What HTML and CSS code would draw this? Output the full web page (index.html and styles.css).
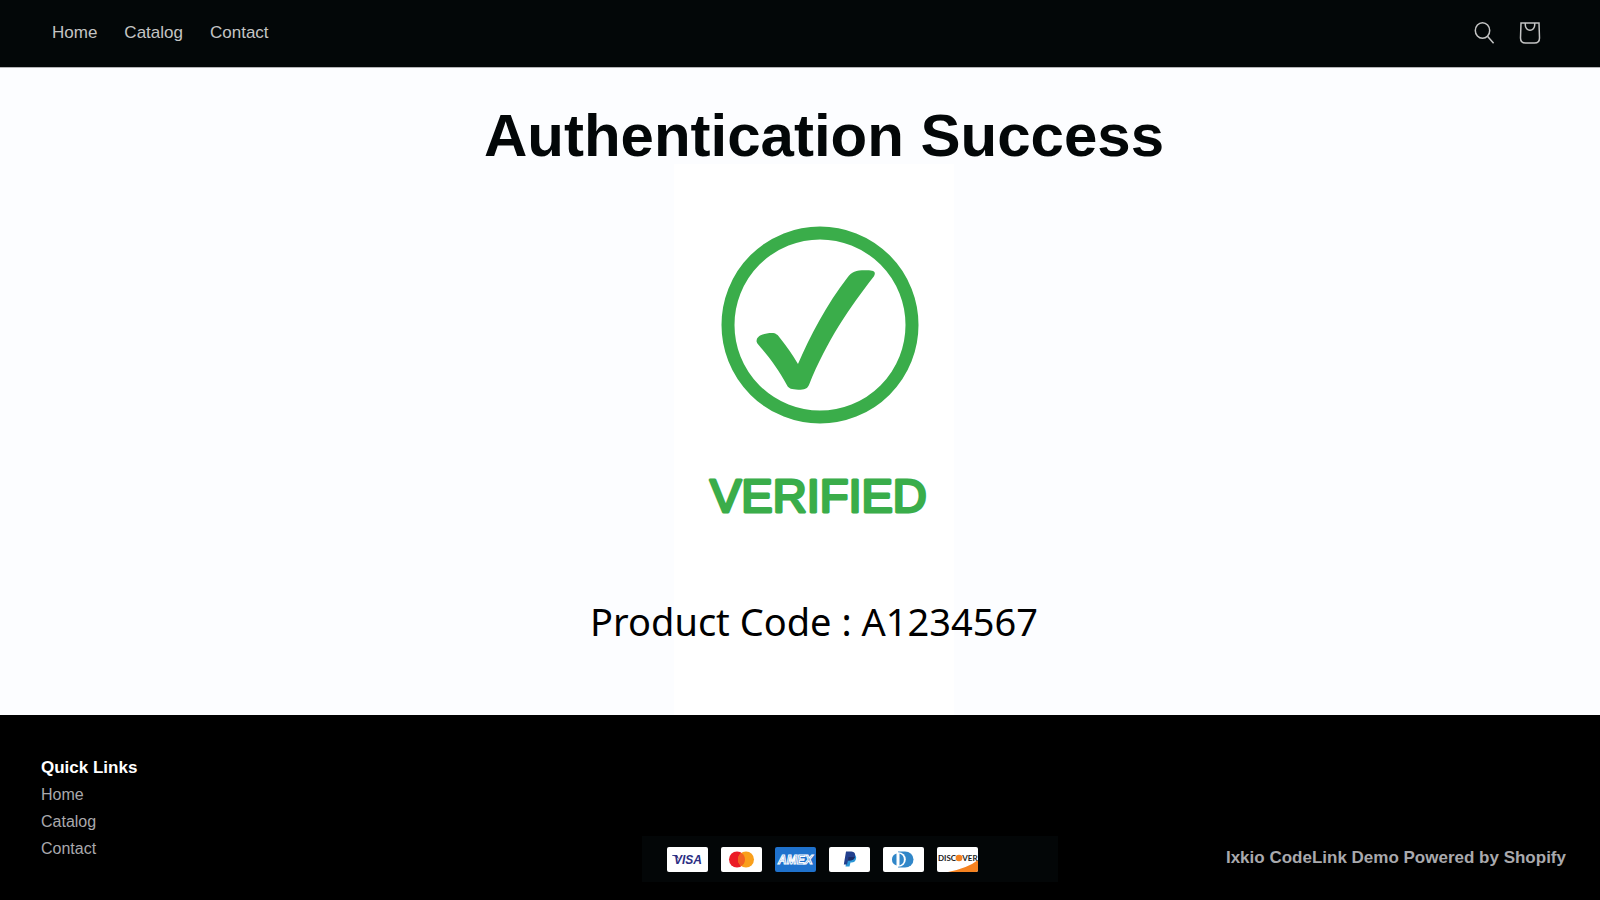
FILE: index.html
```
<!DOCTYPE html>
<html lang="en">
<head>
  <meta charset="UTF-8" />
  <meta name="viewport" content="width=device-width, initial-scale=1" />
  <title>Authentication Success</title>
  <link rel="stylesheet" href="styles.css">
</head>
<body>
  <header class="site-header">
    <nav aria-label="Main">
      <ul class="nav-list">
        <li><a href="#">Home</a></li>
        <li><a href="#">Catalog</a></li>
        <li><a href="#">Contact</a></li>
      </ul>
    </nav>
    <div class="header-icons">
      <button type="button" aria-label="Search">
        <svg viewBox="0 0 24 24" class="icon">
          <ellipse cx="10.5" cy="9.5" rx="7.2" ry="7.8" />
          <path d="M15.500 15.200 L21.600 22.200" />
        </svg>
      </button>
      <a href="#" aria-label="Cart">
        <svg viewBox="0 0 24 24" class="icon">
          <path d="M3 2 H21 L21.5 17 Q21.5 22 16.5 22 H7.5 Q2.5 22 2.5 17 Z" />
          <path d="M7.3 2 V4 A4.7 5.2 0 0 0 16.7 4 V2" />
        </svg>
      </a>
    </div>
  </header>

  <main class="result">
    <h1>Authentication Success</h1>
    <section class="panel">
      <svg viewBox="0 0 280 380" class="badge">
        <circle cx="146" cy="161" r="92" />
        <path transform="translate(-14 37) scale(.3333)" d="M290 418 C292 402 318 396 335 396 C348 396 354 402 360 411 C380 436 397 460 414 489 C450 405 500 310 562 230 C575 213 588 208 615 208 C645 207 648 213 642 226 C570 318 500 420 447 552 C441 564 434 566 415 566 C395 566 386 563 381 553 C355 503 327 468 296 432 Q288 424 290 418 Z" />
        <text x="36" y="348">VERIFIED</text>
      </svg>
      <p class="product-code">Product Code : A1234567</p>
    </section>
  </main>

  <footer class="site-footer">
    <div class="quick-links">
      <h2>Quick Links</h2>
      <ul>
        <li><a href="#">Home</a></li>
        <li><a href="#">Catalog</a></li>
        <li><a href="#">Contact</a></li>
      </ul>
    </div>

    <!-- Payment methods -->
    <ul class="payments">
      <li>
        <svg viewBox="0 0 41 25" class="card">
          <text x="7" y="17" class="visa">VISA</text>
          <path d="M5 8 H10 L12 12 Q9 9 5 8.6 Z" fill="#2b2e83" />
        </svg>
      </li>
      <li>
        <svg viewBox="0 0 41 25" class="card" role="img" aria-label="Mastercard">
          <circle cx="16" cy="12.5" r="8" fill="#eb1c26" />
          <circle cx="25" cy="12.5" r="8" fill="#f99f1b" />
          <path d="M20.5 5.9 A8 8 0 0 1 20.5 19.1 A8 8 0 0 1 20.5 5.9 Z" fill="#f26122" />
        </svg>
      </li>
      <li>
        <svg viewBox="0 0 41 25" class="card card-amex">
          <text x="3" y="17" class="amex">AMEX</text>
        </svg>
      </li>
      <li>
        <svg viewBox="0 0 41 25" class="card" role="img" aria-label="PayPal">
          <path d="M18.5 7 H24 Q28 8 27 12 Q26 15.5 22.5 15.5 H21.5 L20.5 19.5 H16.5 Z" fill="#2a96d6" />
          <path d="M17 4.5 H22.5 Q27 5 26 9.5 Q25 13.5 20.5 13.5 H19 L18 17.5 H14.8 Z" fill="#23408e" />
          <path d="M19.5 10 H26 Q25 13.5 20.5 13.5 H19 Z" fill="#1b2c66" />
        </svg>
      </li>
      <li>
        <svg viewBox="0 0 41 25" class="card" role="img" aria-label="Diners Club">
          <path d="M15 4.5 H22 A8.5 8 0 0 1 22 20.5 H15 Z" fill="#3086c8" />
          <circle cx="15.5" cy="12.5" r="7.3" fill="#fff" />
          <path d="M13.5 6.5 A6.500 6.300 0 0 0 13.500 18.500 Z M16.500 6.500 A6.300 6.300 0 0 1 16.500 18.500 Z" fill="#3086c8" />
        </svg>
      </li>
      <li>
        <svg viewBox="0 0 41 25" class="card">
          <path d="M41 13 Q31 21 11 25 H41 Z" fill="#f58220" />
          <text x="1" y="14" class="discover">DISC<tspan fill="#f58220">O</tspan>VER</text>
          <circle cx="22" cy="11" r="3.3" fill="#f58220" />
        </svg>
      </li>
    </ul>

    <p class="copyright">Ixkio CodeLink Demo Powered by Shopify</p>
  </footer>
</body>
</html>
```
FILE: styles.css
```
* {
  margin: 0;
  padding: 0;
  box-sizing: border-box;
}
body {
  display: flex;
  flex-direction: column;
  min-height: 100vh;
  background: #fcfdff;
  color: #030708;
  font-family: "Liberation Sans", Arial, sans-serif;
  font-size: 16px;
  line-height: 27px;
}
a {
  color: inherit;
  text-decoration: none;
}
ul {
  list-style: none;
}
svg {
  display: block;
}

/* Header */
.site-header {
  display: flex;
  align-items: center;
  justify-content: space-between;
  padding: 19px 58px 21px 52px;
  background: #030708;
  border-bottom: 1px solid #b4b4b6;
  color: #c4c4c4;
}
.nav-list {
  display: flex;
  gap: 27px;
  font-size: 17px;
}
.header-icons {
  display: flex;
  gap: 22px;
}
.header-icons button {
  background: none;
  border: none;
  color: inherit;
  cursor: pointer;
}
.icon {
  width: 24px;
  height: 24px;
  fill: none;
  stroke: currentColor;
  stroke-width: 1.5;
}

/* Result */
.result {
  flex: 1;
  display: flex;
  flex-direction: column;
  align-items: center;
  padding: 40px 0 0 28px;
}
.result h1 {
  padding-left: 20px;
  font-size: 60px;
  line-height: 56px;
}
.panel {
  flex: 1;
  display: flex;
  flex-direction: column;
  align-items: center;
  gap: 51px;
  width: 280px;
  padding-bottom: 68px;
  background: #fff;
}
.badge {
  width: 280px;
  height: 380px;
  fill: #3aad4a;
}
.badge circle {
  fill: none;
  stroke: #3aad4a;
  stroke-width: 13;
}
.badge text {
  font-size: 47px;
  stroke: #3aad4a;
  stroke-width: 3;
  stroke-linejoin: round;
}
.product-code {
  color: #000;
  font-family: "Noto Sans", sans-serif;
  font-size: 38px;
  line-height: 52px;
  white-space: nowrap;
}

/* Footer */
.site-footer {
  display: grid;
  grid-template-columns: 13fr 416px 11fr;
  align-items: end;
  padding: 39px 34px 18px 41px;
  background: #000;
  color: #a9a9ad;
}
.quick-links {
  padding-bottom: 20px;
}
.quick-links h2 {
  color: #fff;
  font-size: 17px;
}
.payments {
  display: flex;
  gap: 13px;
  padding: 11px 25px 10px;
  background: #030607;
}
.card {
  width: 41px;
  height: 25px;
  border-radius: 2px;
  background: #fff;
}
.card-amex {
  background: #1f72cd;
}
.visa {
  fill: #2b2e83;
  font-size: 12px;
  font-weight: bold;
  font-style: italic;
}
.amex {
  fill: #1f72cd;
  stroke: #fff;
  stroke-width: 1;
  font-size: 12px;
  font-weight: bold;
  font-style: italic;
}
.discover {
  fill: #1c1c1c;
  font-family: Lato, sans-serif;
  font-size: 8px;
  font-weight: bold;
}
.copyright {
  padding-bottom: 11px;
  font-size: 17px;
  font-weight: bold;
  text-align: right;
}
```
